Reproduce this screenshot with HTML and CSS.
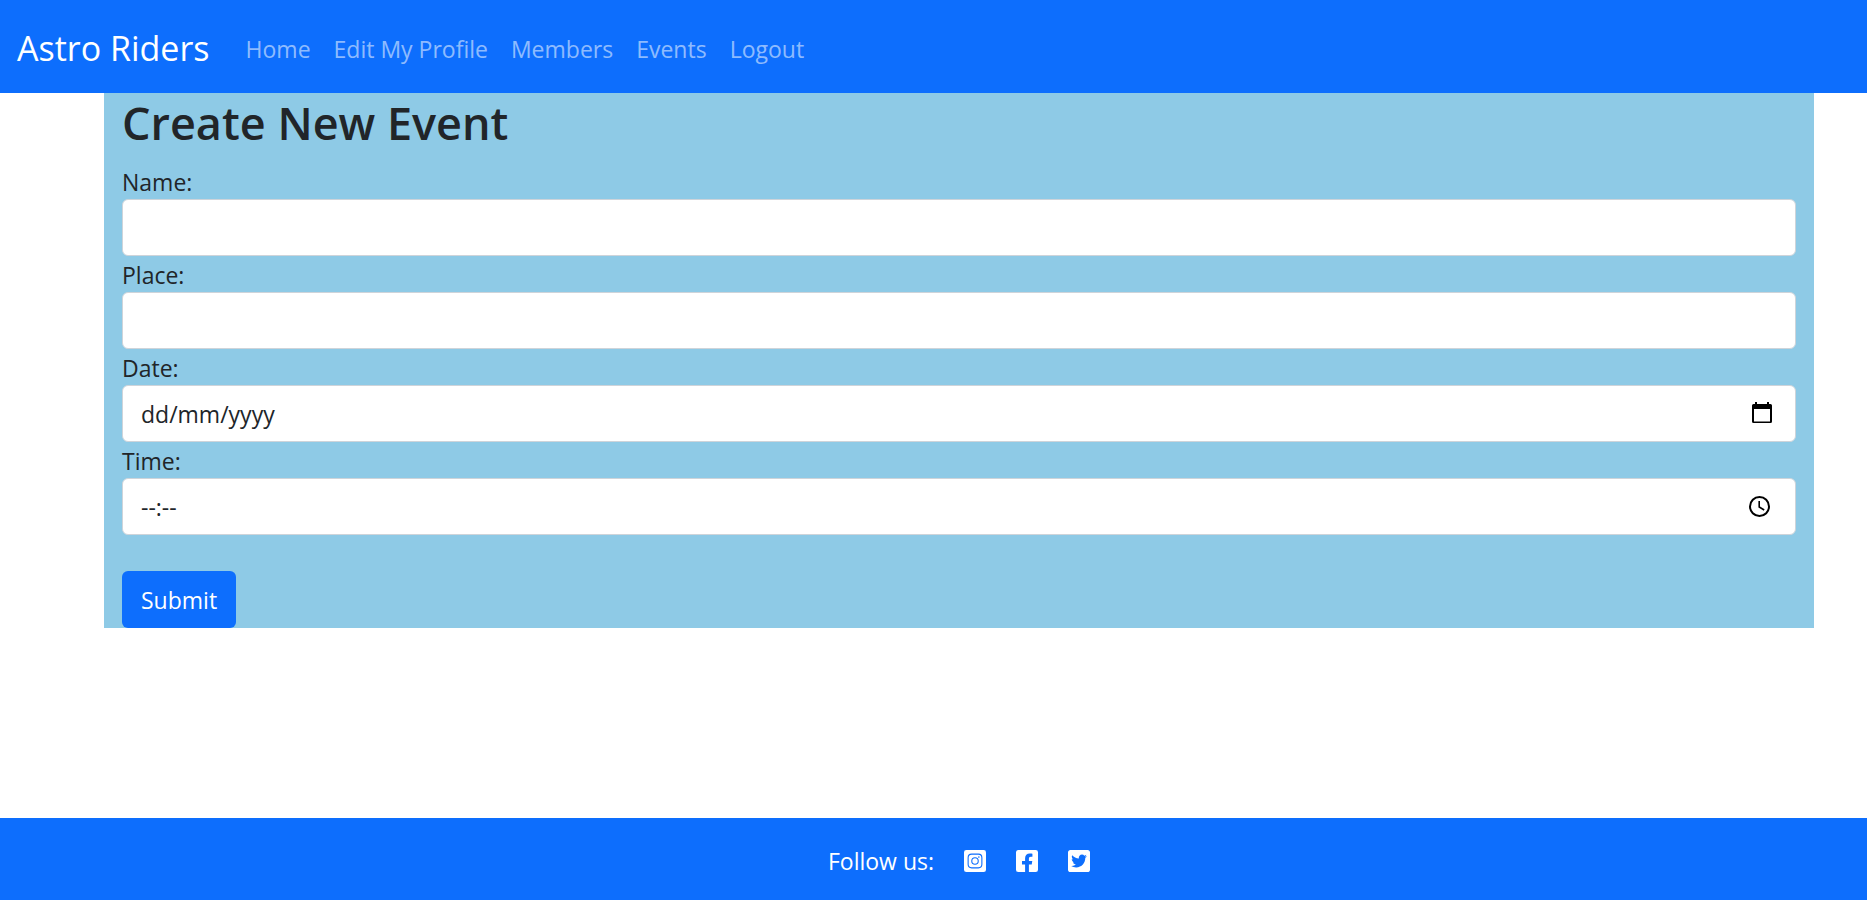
FILE: index.html
```html
<!DOCTYPE html>
<html lang="en">
<head>
<meta charset="utf-8">
<meta name="viewport" content="width=device-width, initial-scale=1">
<title>Astro Riders</title>
<link rel="stylesheet" href="styles.css">
</head>
<body>
<nav class="navbar">
  <a class="brand" href="#">Astro Riders</a>
  <ul class="nav-list">
    <li><a class="nav-link" href="#">Home</a></li>
    <li><a class="nav-link" href="#">Edit My Profile</a></li>
    <li><a class="nav-link" href="#">Members</a></li>
    <li><a class="nav-link" href="#">Events</a></li>
    <li><a class="nav-link" href="#">Logout</a></li>
  </ul>
</nav>
<main class="main">
  <form class="event-form">
    <h1 class="title">Create New Event</h1>
    <label class="label" for="name">Name:</label>
    <input class="control" id="name" type="text">
    <label class="label" for="place">Place:</label>
    <input class="control" id="place" type="text">
    <label class="label" for="date">Date:</label>
    <div class="picker">
      <input class="control" id="date" type="text" placeholder="dd/mm/yyyy">
      <button class="picker-button picker-date" type="button" aria-label="Choose date">
        <svg class="icon" viewBox="0 0 22 22" aria-hidden="true"><path fill-rule="evenodd" d="M4 0h2v2h10V0h2v2h1.500A1.500 1.500 0 0 1 21 3.500V19.500a1.500 1.500 0 0 1-1.500 1.500H2.500A1.500 1.500 0 0 1 1 19.500V3.500A1.500 1.500 0 0 1 2.500 2H4zM3 7V19.500H19V7z"/></svg>
      </button>
    </div>
    <label class="label" for="time">Time:</label>
    <div class="picker">
      <input class="control" id="time" type="text" placeholder="--:--">
      <button class="picker-button picker-time" type="button" aria-label="Choose time">
        <svg class="icon" viewBox="0 0 22 22" aria-hidden="true"><circle cx="10.500" cy="11.500" r="9.500" fill="none" stroke="#000" stroke-width="2"/><path d="M10.200 6V12l5 3" fill="none" stroke="#000" stroke-width="1.600"/></svg>
      </button>
    </div>
    <button class="submit" type="submit">Submit</button>
  </form>
</main>
<footer class="footer">
  <span>Follow us:</span>
  <a class="social" href="#" aria-label="Instagram"><svg class="icon" viewBox="0 32 448 448" aria-hidden="true"><rect y="32" width="448" height="448" rx="48" fill="#fff"/><g fill="none" stroke="#0d6efd" stroke-width="22"><rect x="84" y="116" width="280" height="280" rx="72"/><circle cx="224" cy="256" r="66"/></g><circle cx="303" cy="177" r="16" fill="#0d6efd"/></svg></a>
  <a class="social" href="#" aria-label="Facebook"><svg class="icon" viewBox="0 32 448 448" aria-hidden="true"><path fill="#fff" d="M400 32H48A48 48 0 0 0 0 80v352a48 48 0 0 0 48 48h137.250V327.690h-63V256h63v-54.640c0-62.150 37-96.480 93.670-96.480 27.140 0 55.520 4.840 55.520 4.840v61h-31.270c-30.810 0-40.420 19.120-40.420 38.730V256h68.780l-11 71.690h-57.780V480H400a48 48 0 0 0 48-48V80a48 48 0 0 0-48-48z"/></svg></a>
  <a class="social" href="#" aria-label="Twitter"><svg class="icon" viewBox="0 32 448 448" aria-hidden="true"><path fill="#fff" d="M400 32H48C21.500 32 0 53.500 0 80v352c0 26.500 21.500 48 48 48h352c26.500 0 48-21.500 48-48V80c0-26.500-21.500-48-48-48zm-48.900 158.800c.2 2.800.2 5.700.2 8.500 0 86.700-66 186.600-186.600 186.600-37.200 0-71.700-10.800-100.700-29.400 5.300.6 10.400.8 15.800.8 30.700 0 58.900-10.400 81.400-28-28.800-.6-53-19.500-61.300-45.500 10.100 1.500 19.200 1.500 29.600-1.200-30-6.100-52.500-32.500-52.500-64.400v-.8c8.700 4.900 18.900 7.900 29.600 8.300a65.447 65.447 0 0 1-29.200-54.600c0-12.200 3.200-23.400 8.900-33.100 32.300 39.800 80.800 65.800 135.200 68.600-9.300-44.500 24-80.600 64-80.600 18.900 0 35.900 7.900 47.900 20.700 14.800-2.800 29-8.300 41.600-15.800-4.900 15.200-15.200 28-28.800 36.100 13.200-1.400 26-5.100 37.800-10.200-8.900 13.100-20.100 24.700-32.900 34z"/></svg></a>
</footer>
</body>
</html>
```

FILE: styles.css
```css
* {
  box-sizing: border-box;
}

body {
  margin: 0;
  min-height: 100vh;
  display: flex;
  flex-direction: column;
  background: #fff;
  color: #212529;
  font-family: "Open Sans", "Noto Sans", sans-serif;
  font-size: 23px;
  line-height: 36px;
}

a {
  text-decoration: none;
}

.navbar {
  display: flex;
  align-items: center;
  gap: 36px;
  padding: 20px 17px 16px;
  background: #0d6efd;
}

.brand {
  color: #fff;
  font-size: 34px;
  line-height: 57px;
}

.nav-list {
  display: flex;
  gap: 23px;
  margin: 0;
  padding: 0;
  list-style: none;
}

.nav-link {
  color: rgba(255, 255, 255, 0.55);
}

.main {
  flex: 1;
  padding: 0 53px 0 104px;
}

.event-form {
  display: flex;
  flex-direction: column;
  padding: 0 18px;
  background: #8ecae6;
}

.title {
  margin: 0 0 12px;
  padding-top: 2px;
  font-size: 45px;
  font-weight: 600;
  line-height: 56px;
}

.label {
  padding-top: 2px;
  line-height: 34px;
}

.control {
  display: block;
  width: 100%;
  height: 57px;
  padding: 0 18px;
  border: 1px solid #ced4da;
  border-radius: 6px;
  background: #fff;
  color: #212529;
  font: inherit;
}

.control::placeholder {
  color: #212529;
  opacity: 1;
}

.picker {
  position: relative;
}

.picker-button {
  position: absolute;
  top: 17px;
  width: 22px;
  height: 22px;
  padding: 0;
  border: 0;
  background: none;
}

.picker-date {
  right: 23px;
}

.picker-time {
  right: 25px;
}

.icon {
  display: block;
  width: 22px;
  height: 22px;
}

.submit {
  align-self: flex-start;
  margin-top: 36px;
  padding: 11px 19px 10px;
  border: 0;
  border-radius: 6px;
  background: #0d6efd;
  color: #fff;
  font: inherit;
}

.footer {
  display: flex;
  align-items: center;
  justify-content: center;
  gap: 30px;
  padding: 25px 0 21px 51px;
  background: #0d6efd;
  color: #fff;
}
```
